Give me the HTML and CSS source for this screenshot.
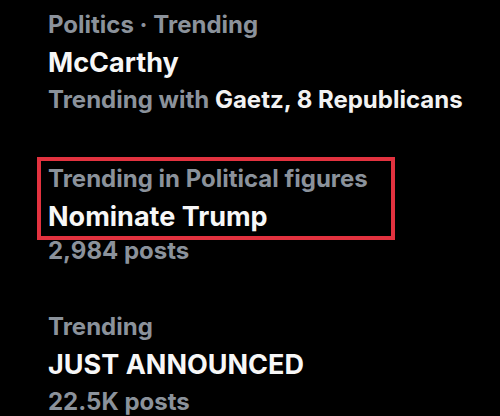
FILE: index.html
```html
<!DOCTYPE html>
<html lang="en">
<head>
<meta charset="utf-8">
<title>Trends</title>
<link rel="stylesheet" href="styles.css">
</head>
<body>
  <main class="trends">
    <section class="trend">
      <div class="meta">Politics · Trending</div>
      <div class="title">McCarthy</div>
      <div class="meta">Trending with <span class="with">Gaetz, 8 Republicans</span></div>
    </section>
    <section class="trend">
      <div class="highlight">
        <div class="meta">Trending in Political figures</div>
        <div class="title">Nominate Trump</div>
      </div>
      <div class="meta">2,984 posts</div>
    </section>
    <section class="trend">
      <div class="meta">Trending</div>
      <div class="title">JUST ANNOUNCED</div>
      <div class="meta">22.5K posts</div>
    </section>
  </main>
</body>
</html>
```

FILE: styles.css
```css
html, body {
  margin: 0;
  padding: 0;
  background: #000;
}

body {
  width: 500px;
  height: 416px;
  overflow: hidden;
  font-family: Inter, "Liberation Sans", sans-serif;
  font-weight: 700;
}

.trends {
  display: flex;
  flex-direction: column;
  gap: 40px;
  padding: 7px 0 0 48px;
}

.trend {
  display: flex;
  flex-direction: column;
}

.meta {
  font-size: 24px;
  line-height: 36px;
  color: #8b929b;
  white-space: nowrap;
}

.meta .with {
  color: #f2f2f2;
}

.title {
  font-size: 27px;
  line-height: 39px;
  color: #f7f7f7;
  white-space: nowrap;
}

.highlight {
  width: 358px;
  box-sizing: border-box;
  margin: -1px 0 -7px -11px;
  padding-left: 7px;
  border: 4px solid #e2323f;
}
```
